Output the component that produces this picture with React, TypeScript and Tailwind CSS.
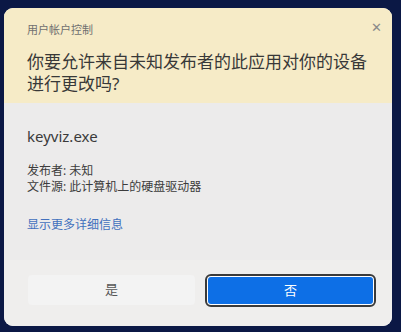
const font = { fontFamily: "'Noto Sans', 'Noto Sans CJK SC', sans-serif" };

export default function App() {
  return (
    <div
      style={font}
      className="w-[401px] h-[332px] bg-[#0b1845] pt-[8px] pl-[4px] pr-[9px] pb-[6px] overflow-hidden"
    >
      <div className="w-full h-full rounded-[9px] overflow-hidden flex flex-col bg-[#ecebeb]">
        {/* header */}
        <div className="h-[95px] bg-[#f6ebc7] pl-[23px] pr-[10px] flex flex-col">
          <div className="flex items-start justify-between pt-[15px]">
            <span className="text-[11px] leading-[14px] text-[#707070]">用户帐户控制</span>
            <span className="text-[13px] leading-[13px] text-[#8a8a8a] -mt-[2px]">✕</span>
          </div>
          <h1 className="mt-[14px] text-[17px] leading-[22px] text-[#383838] font-normal whitespace-nowrap">
            你要允许来自未知发布者的此应用对你的设备
            <br />
            进行更改吗?
          </h1>
        </div>

        {/* body */}
        <div className="flex-1 pl-[23px] pt-[23px] flex flex-col">
          <p className="text-[15px] leading-[20px] text-[#3a3a3a]">keyviz.exe</p>
          <div className="mt-[17px] text-[12px] leading-[16px] text-[#3c3c3c]">
            <p>发布者: 未知</p>
            <p>文件源: 此计算机上的硬盘驱动器</p>
          </div>
          <p className="mt-[22px] text-[12px] leading-[16px] text-[#4270bd]">显示更多详细信息</p>
        </div>

        {/* footer */}
        <div className="h-[66px] bg-[#efeeed] pl-[24px] pt-[14px] flex gap-[10px]">
          <button className="w-[167px] h-[30px] mt-[1px] rounded-[4px] bg-[#f3f3f3] text-[13px] text-[#555]">
            是
          </button>
          <div className="w-[171px] h-[33px] rounded-[6px] border-2 border-[#3a3a3a] p-[1px] bg-white">
            <button className="w-full h-full rounded-[3px] bg-[#0d6fe6] text-[13px] text-white">
              否
            </button>
          </div>
        </div>
      </div>
    </div>
  );
}
